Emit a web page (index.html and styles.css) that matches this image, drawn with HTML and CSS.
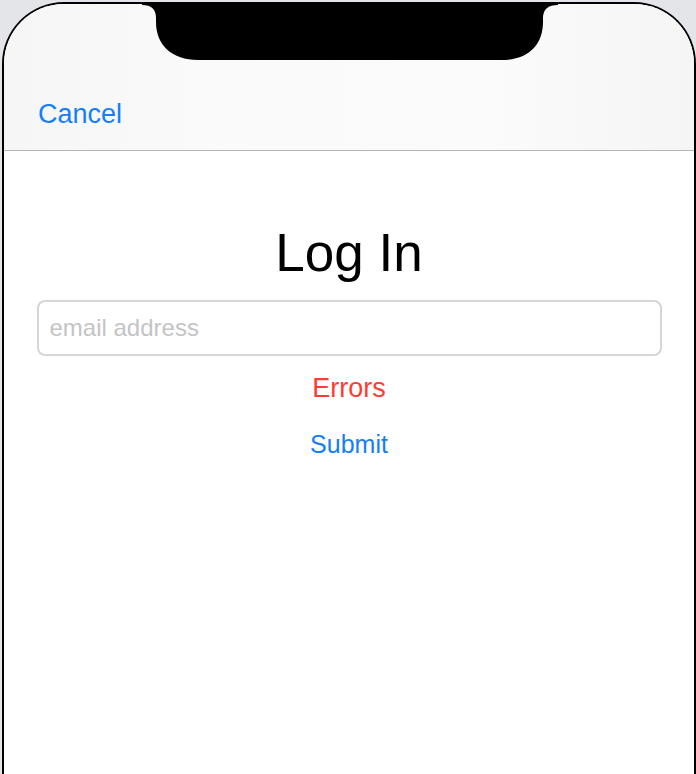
FILE: index.html
```html
<!DOCTYPE html>
<html lang="en">
<head>
<meta charset="utf-8">
<title>Log In</title>
<link rel="stylesheet" href="styles.css">
</head>
<body>
<div class="phone">
  <header class="navbar">
    <a class="cancel" href="#">Cancel</a>
  </header>
  <main class="content">
    <h1 class="title">Log In</h1>
    <input class="email" type="email" placeholder="email address">
    <div class="errors">Errors</div>
    <button class="submit" type="button">Submit</button>
  </main>
  <svg class="notch" width="420" height="62" viewBox="0 0 420 62" aria-hidden="true">
    <path d="M2 0 L418 0 L418 5 Q403 5 403 18 L403 22 C403 45 388 60 362 60 L58 60 C32 60 16 45 16 22 L16 18 Q16 5 2 5 Z" fill="#000"/>
  </svg>
</div>
</body>
</html>
```
FILE: styles.css
```css
html, body {
  margin: 0;
  padding: 0;
  overflow: hidden;
  height: 100%;
}
body {
  background: #e4e5e9;
  font-family: "Liberation Sans", Arial, sans-serif;
}
.phone {
  position: relative;
  box-sizing: border-box;
  width: 694px;
  height: 772px;
  margin: 2px 0 0 2px;
  border: 2px solid #000;
  border-bottom: none;
  border-radius: 62px 62px 0 0;
  background: #fff;
  overflow: hidden;
}
.navbar {
  box-sizing: border-box;
  height: 147px;
  padding: 0 0 20px 34px;
  display: flex;
  align-items: flex-end;
  background: linear-gradient(90deg, #f6f6f6 0%, #fafafa 30%, #fbfbfb 70%, #f5f5f5 100%);
  border-bottom: 1px solid #b4b4b4;
}
.cancel {
  font-size: 27px;
  line-height: 32px;
  color: #157efb;
  text-decoration: none;
}
.content {
  display: flex;
  flex-direction: column;
  align-items: center;
  padding: 71px 33px 0 33px;
}
.title {
  margin: 0;
  font-weight: normal;
  font-size: 53px;
  line-height: 61px;
  color: #000;
}
.email {
  box-sizing: border-box;
  width: 625px;
  height: 56px;
  margin-top: 17px;
  padding: 0 11px;
  border: 2px solid #d6d6d6;
  border-radius: 8px;
  background: #fff;
  font-family: "Liberation Sans", Arial, sans-serif;
  font-size: 24px;
  color: #000;
  outline: none;
}
.email::placeholder {
  color: #c4c4c6;
}
.errors {
  margin-top: 17px;
  font-size: 27px;
  line-height: 30px;
  color: #fd3d33;
}
.submit {
  margin-top: 26px;
  padding: 0;
  border: none;
  background: none;
  font-family: "Liberation Sans", Arial, sans-serif;
  font-size: 25px;
  line-height: 30px;
  color: #157efb;
}
.notch {
  position: absolute;
  top: -4px;
  left: 136px;
  display: block;
}
```
